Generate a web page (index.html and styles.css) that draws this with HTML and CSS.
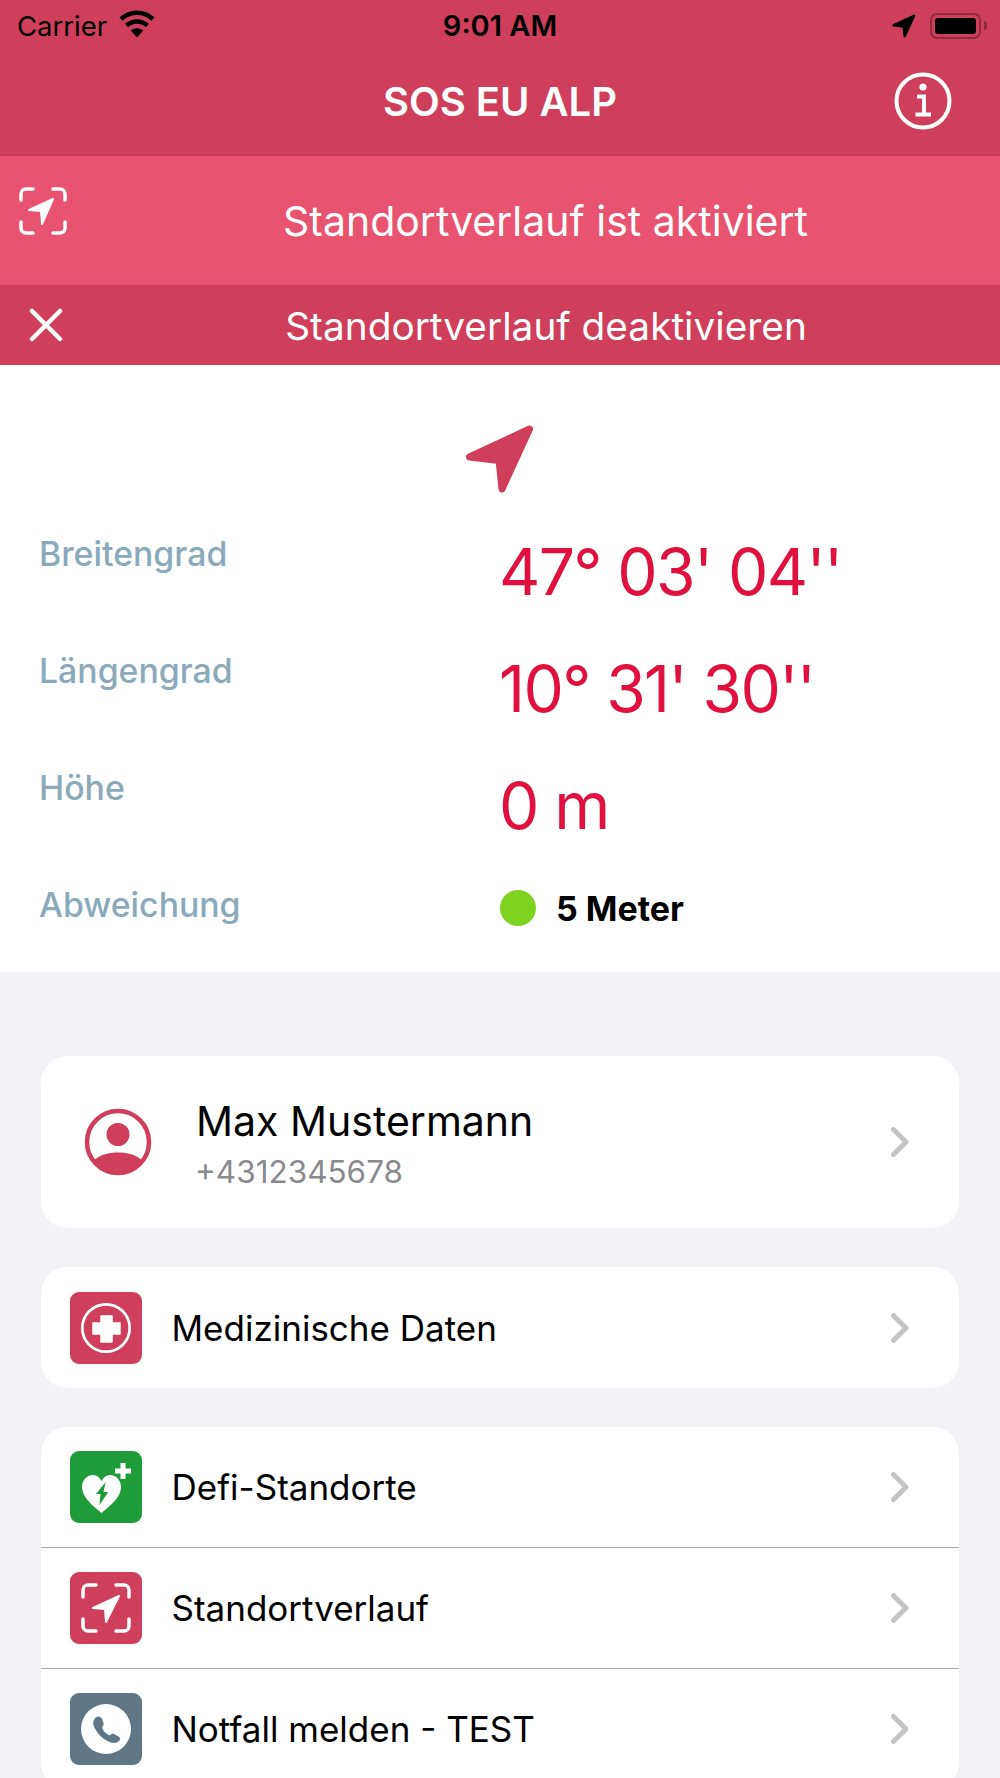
FILE: index.html
```html
<!DOCTYPE html>
<html lang="de">
<head>
    <meta charset="UTF-8">
    <meta name="viewport" content="width=device-width, initial-scale=1.0">
    <title>SOS EU ALP</title>
    <link rel="stylesheet" href="styles.css">
</head>
<body>
    <svg class="defs" width="0" height="0">
        <symbol id="arrow" viewBox="0 0 70 70">
            <path d="M64.500 5 4.500 33 34 36.500 37 65Z" fill="currentColor" stroke="currentColor" stroke-width="7" stroke-linejoin="round"/>
        </symbol>
        <symbol id="chevron" viewBox="0 0 18 30">
            <path d="M2.500 2.500 15 15 2.500 27.500" fill="none" stroke="#c4c4c7" stroke-width="5" stroke-linecap="round" stroke-linejoin="round"/>
        </symbol>
    </svg>

    <div class="page">
        <header class="top">
            <div class="status">
                <div class="status-left">
                    <span>Carrier</span>
                    <svg class="wifi" viewBox="0 0 38 28">
                        <path d="M19 27.500 12.800 20.500A9.500 9.500 0 0 1 25.200 20.500Z" fill="#000"/>
                        <path d="M8.500 15.500A15.500 15.500 0 0 1 29.500 15.500" fill="none" stroke="#000" stroke-width="4.500"/>
                        <path d="M3 9A23.500 23.500 0 0 1 35 9" fill="none" stroke="#000" stroke-width="4.500"/>
                    </svg>
                </div>
                <div class="status-time">9:01 AM</div>
                <div class="status-right">
                    <svg class="status-arrow"><use href="#arrow"/></svg>
                    <div class="battery"><div class="battery-level"></div></div>
                    <div class="battery-nub"></div>
                </div>
            </div>
            <div class="nav">
                <h1>SOS EU ALP</h1>
                <svg class="info" viewBox="0 0 58 58">
                    <circle cx="29" cy="29" r="26.500" fill="none" stroke="#fff" stroke-width="4"/>
                    <circle cx="29" cy="15" r="3.600" fill="#fff"/>
                    <path d="M23 24.500H30V42M21.500 42.500H37" fill="none" stroke="#fff" stroke-width="4"/>
                </svg>
            </div>
        </header>

        <div class="banner">
            <svg class="track-icon banner-icon" viewBox="0 0 48 48">
                <path d="M2 13V7a5 5 0 0 1 5-5h7M34 2h7a5 5 0 0 1 5 5v6M46 35v6a5 5 0 0 1-5 5h-7M14 46H7a5 5 0 0 1-5-5v-6" fill="none" stroke="#fff" stroke-width="3.500" stroke-linecap="round"/>
                <path d="M34 12 10 23 22 24 23 37Z" fill="#fff" stroke="#fff" stroke-width="2" stroke-linejoin="round"/>
            </svg>
            <div class="banner-text">Standortverlauf ist aktiviert</div>
        </div>
        <div class="stop-bar">
            <svg class="close" viewBox="0 0 34 34">
                <path d="M3 3 31 31M31 3 3 31" fill="none" stroke="#fff" stroke-width="4.500" stroke-linecap="round"/>
            </svg>
            <div class="banner-text">Standortverlauf deaktivieren</div>
        </div>

        <section class="position">
            <svg class="position-arrow"><use href="#arrow"/></svg>
            <div class="coords">
                <div class="coord-label">Breitengrad</div>
                <div class="coord-value">47° 03' 04''</div>
                <div class="coord-label">Längengrad</div>
                <div class="coord-value">10° 31' 30''</div>
                <div class="coord-label">Höhe</div>
                <div class="coord-value">0 m</div>
                <div class="coord-label">Abweichung</div>
                <div class="accuracy"><span class="dot"></span><span>5 Meter</span></div>
            </div>
        </section>

        <main class="lists">
            <div class="card profile">
                <svg class="avatar" viewBox="0 0 68 68">
                    <circle cx="34" cy="34" r="31" fill="none" stroke="#cf3e5a" stroke-width="4.500"/>
                    <circle cx="34" cy="26.500" r="11.500" fill="#cf3e5a"/>
                    <path d="M8.400 51.500H11C18 46 26 44.500 34 44.500S50 46 57 51.500H59.600A31 31 0 0 1 8.400 51.500Z" fill="#cf3e5a"/>
                </svg>
                <div class="profile-text">
                    <div class="name">Max Mustermann</div>
                    <div class="phone">+4312345678</div>
                </div>
                <svg class="chevron"><use href="#chevron"/></svg>
            </div>

            <div class="card">
                <div class="row row-single">
                    <svg class="tile" viewBox="0 0 72 72">
                        <rect width="72" height="72" rx="9" fill="#cf3e5a"/>
                        <circle cx="36" cy="36" r="23.700" fill="none" stroke="#fff" stroke-width="2.700"/>
                        <path d="M31 24H42V31H50V42H42V50H31V42H23V31H31Z" fill="#fff" stroke="#fff" stroke-width="1.500" stroke-linejoin="round"/>
                    </svg>
                    <span class="row-text">Medizinische Daten</span>
                    <svg class="chevron"><use href="#chevron"/></svg>
                </div>
            </div>

            <div class="card">
                <div class="row">
                    <svg class="tile" viewBox="0 0 72 72">
                        <rect width="72" height="72" rx="9" fill="#1e9c3a"/>
                        <path d="M31.500 62C22 54 12 46 12 36 12 29 17 24 23 24 26.500 24 29.500 26 31.500 30 33.500 26 36.500 24 40 24 46 24 51 29 51 36 51 46 41 54 31.500 62Z" fill="#fff"/>
                        <path d="M35.700 31 26 43H30.500L29.500 54 38.300 41H33.500Z" fill="#1e9c3a"/>
                        <path d="M53 12V28M45 20H61" fill="none" stroke="#fff" stroke-width="5"/>
                    </svg>
                    <span class="row-text">Defi-Standorte</span>
                    <svg class="chevron"><use href="#chevron"/></svg>
                </div>
                <div class="row">
                    <svg class="tile" viewBox="0 0 72 72">
                        <rect width="72" height="72" rx="9" fill="#cf3e5a"/>
                        <path d="M13 25V18a5 5 0 0 1 5-5h8M46 13h8a5 5 0 0 1 5 5v7M59 47v7a5 5 0 0 1-5 5h-8M26 59h-8a5 5 0 0 1-5-5v-7" fill="none" stroke="#fff" stroke-width="3.500" stroke-linecap="round"/>
                        <path d="M49 24 23 36 35 37 36 50Z" fill="#fff" stroke="#fff" stroke-width="2" stroke-linejoin="round"/>
                    </svg>
                    <span class="row-text">Standortverlauf</span>
                    <svg class="chevron"><use href="#chevron"/></svg>
                </div>
                <div class="row">
                    <svg class="tile" viewBox="0 0 72 72">
                        <rect width="72" height="72" rx="9" fill="#5f7686"/>
                        <circle cx="36" cy="36" r="25" fill="#fff"/>
                        <path d="M27 24C29 23 31 24 32 26L33.500 30C34 32 33 33 32 34.500 33 38 36 41 39.500 42.500 41 41 42.500 40.500 44 41L48.500 43.500C50 44.500 50.500 46 49.500 47.500 47.500 50 44 50.500 41 49.500 33 47 25.500 39 23.500 32 22.500 28 24.500 25 27 24Z" fill="#5f7686"/>
                    </svg>
                    <span class="row-text">Notfall melden - TEST</span>
                    <svg class="chevron"><use href="#chevron"/></svg>
                </div>
            </div>
        </main>
    </div>
</body>
</html>
```

FILE: styles.css
```css
body {
    margin: 0;
    background-color: #f2f2f7;
    font-family: Inter, "Liberation Sans", sans-serif;
    color: #000;
}

.defs {
    display: block;
    height: 0;
}

.page {
    height: 1778px;
    overflow: hidden;
}

.top {
    height: 155px;
    background-color: #cf3e5a;
    border-bottom: 1px solid #c23a55;
}

.status {
    display: grid;
    grid-template-columns: 1fr auto 1fr;
    align-items: center;
    box-sizing: border-box;
    height: 48px;
    padding-top: 3px;
    font-size: 27.500px;
}

.status-left {
    display: flex;
    align-items: center;
    gap: 11px;
    padding-left: 17px;
}

.wifi {
    width: 38px;
    height: 28px;
    margin-bottom: 4px;
}

.status-time {
    font-size: 29px;
    font-weight: 600;
}

.status-right {
    display: flex;
    align-items: center;
    justify-content: flex-end;
    padding-right: 13px;
}

.status-arrow {
    width: 24px;
    height: 24px;
    margin-right: 14px;
    color: #000;
}

.battery {
    box-sizing: border-box;
    width: 51px;
    height: 26px;
    padding: 3px;
    border: 2px solid #8e2c41;
    border-radius: 7px;
}

.battery-level {
    height: 100%;
    background-color: #000;
    border-radius: 3px;
}

.battery-nub {
    width: 3px;
    height: 9px;
    margin-left: 3px;
    background-color: #8e2c41;
    border-radius: 0 3px 3px 0;
}

.nav {
    display: flex;
    align-items: center;
    justify-content: center;
    position: relative;
    height: 107px;
}

.nav h1 {
    margin: 0;
    color: #fff;
    font-size: 40px;
    font-weight: 600;
}

.info {
    position: absolute;
    top: 24px;
    left: 894px;
    width: 58px;
    height: 58px;
}

.banner {
    display: flex;
    height: 129px;
    background-color: #e8546f;
}

.track-icon {
    flex-shrink: 0;
}

.banner-icon {
    width: 48px;
    height: 48px;
    margin: 31px 0 0 19px;
}

.banner-text {
    flex: 1;
    align-self: center;
    text-align: center;
    color: #fff;
    font-size: 38.800px;
}

.banner .banner-text {
    padding-left: 24px;
    font-size: 41px;
}

.stop-bar {
    display: flex;
    align-items: center;
    height: 80px;
    background-color: #cf3e5a;
}

.close {
    flex-shrink: 0;
    width: 34px;
    height: 34px;
    margin-left: 29px;
}

.stop-bar .banner-text {
    padding-left: 29px;
}

.position {
    height: 607px;
    box-sizing: border-box;
    padding-top: 59px;
    background-color: #fff;
}

.position-arrow {
    display: block;
    width: 70px;
    height: 70px;
    margin: 0 auto;
    color: #cf3e5a;
}

.coords {
    display: grid;
    grid-template-columns: 462px 1fr;
    grid-auto-rows: 117px;
    padding: 40px 0 0 39px;
}

.coord-label {
    margin-top: -1px;
    color: #8aa9bb;
    font-size: 33.800px;
    font-weight: 500;
}

.coord-value {
    margin-left: -2px;
    color: #e0103f;
    font-size: 64px;
    letter-spacing: -1.600px;
    line-height: 76px;
}

.accuracy {
    display: flex;
    align-items: center;
    gap: 20px;
    margin-left: -1px;
    height: 46px;
    font-size: 34px;
    font-weight: 700;
}

.dot {
    width: 36px;
    height: 36px;
    background-color: #7ed321;
    border-radius: 50%;
}

.lists {
    display: flex;
    flex-direction: column;
    gap: 39px;
    padding: 84px 41px 0;
}

.card {
    background-color: #fff;
    border-radius: 26px;
}

.profile {
    display: flex;
    align-items: center;
    height: 172px;
    padding: 0 50px 0 43px;
}

.avatar {
    width: 68px;
    height: 68px;
    margin-right: 44px;
}

.profile-text {
    flex: 1;
}

.name {
    font-size: 41px;
}

.phone {
    margin: 6px 0 -2px -1px;
    color: #8a8a8e;
    font-size: 31.500px;
}

.row {
    display: flex;
    align-items: center;
    height: 120px;
    padding: 0 50px 0 29px;
    border-bottom: 1px solid #adadaf;
}

.row:last-child {
    border-bottom: none;
}

.row-single {
    height: 121px;
}

.tile {
    width: 72px;
    height: 72px;
    margin-right: 29.500px;
}

.row-text {
    flex: 1;
    font-size: 35px;
}

.chevron {
    width: 18px;
    height: 30px;
}
```
